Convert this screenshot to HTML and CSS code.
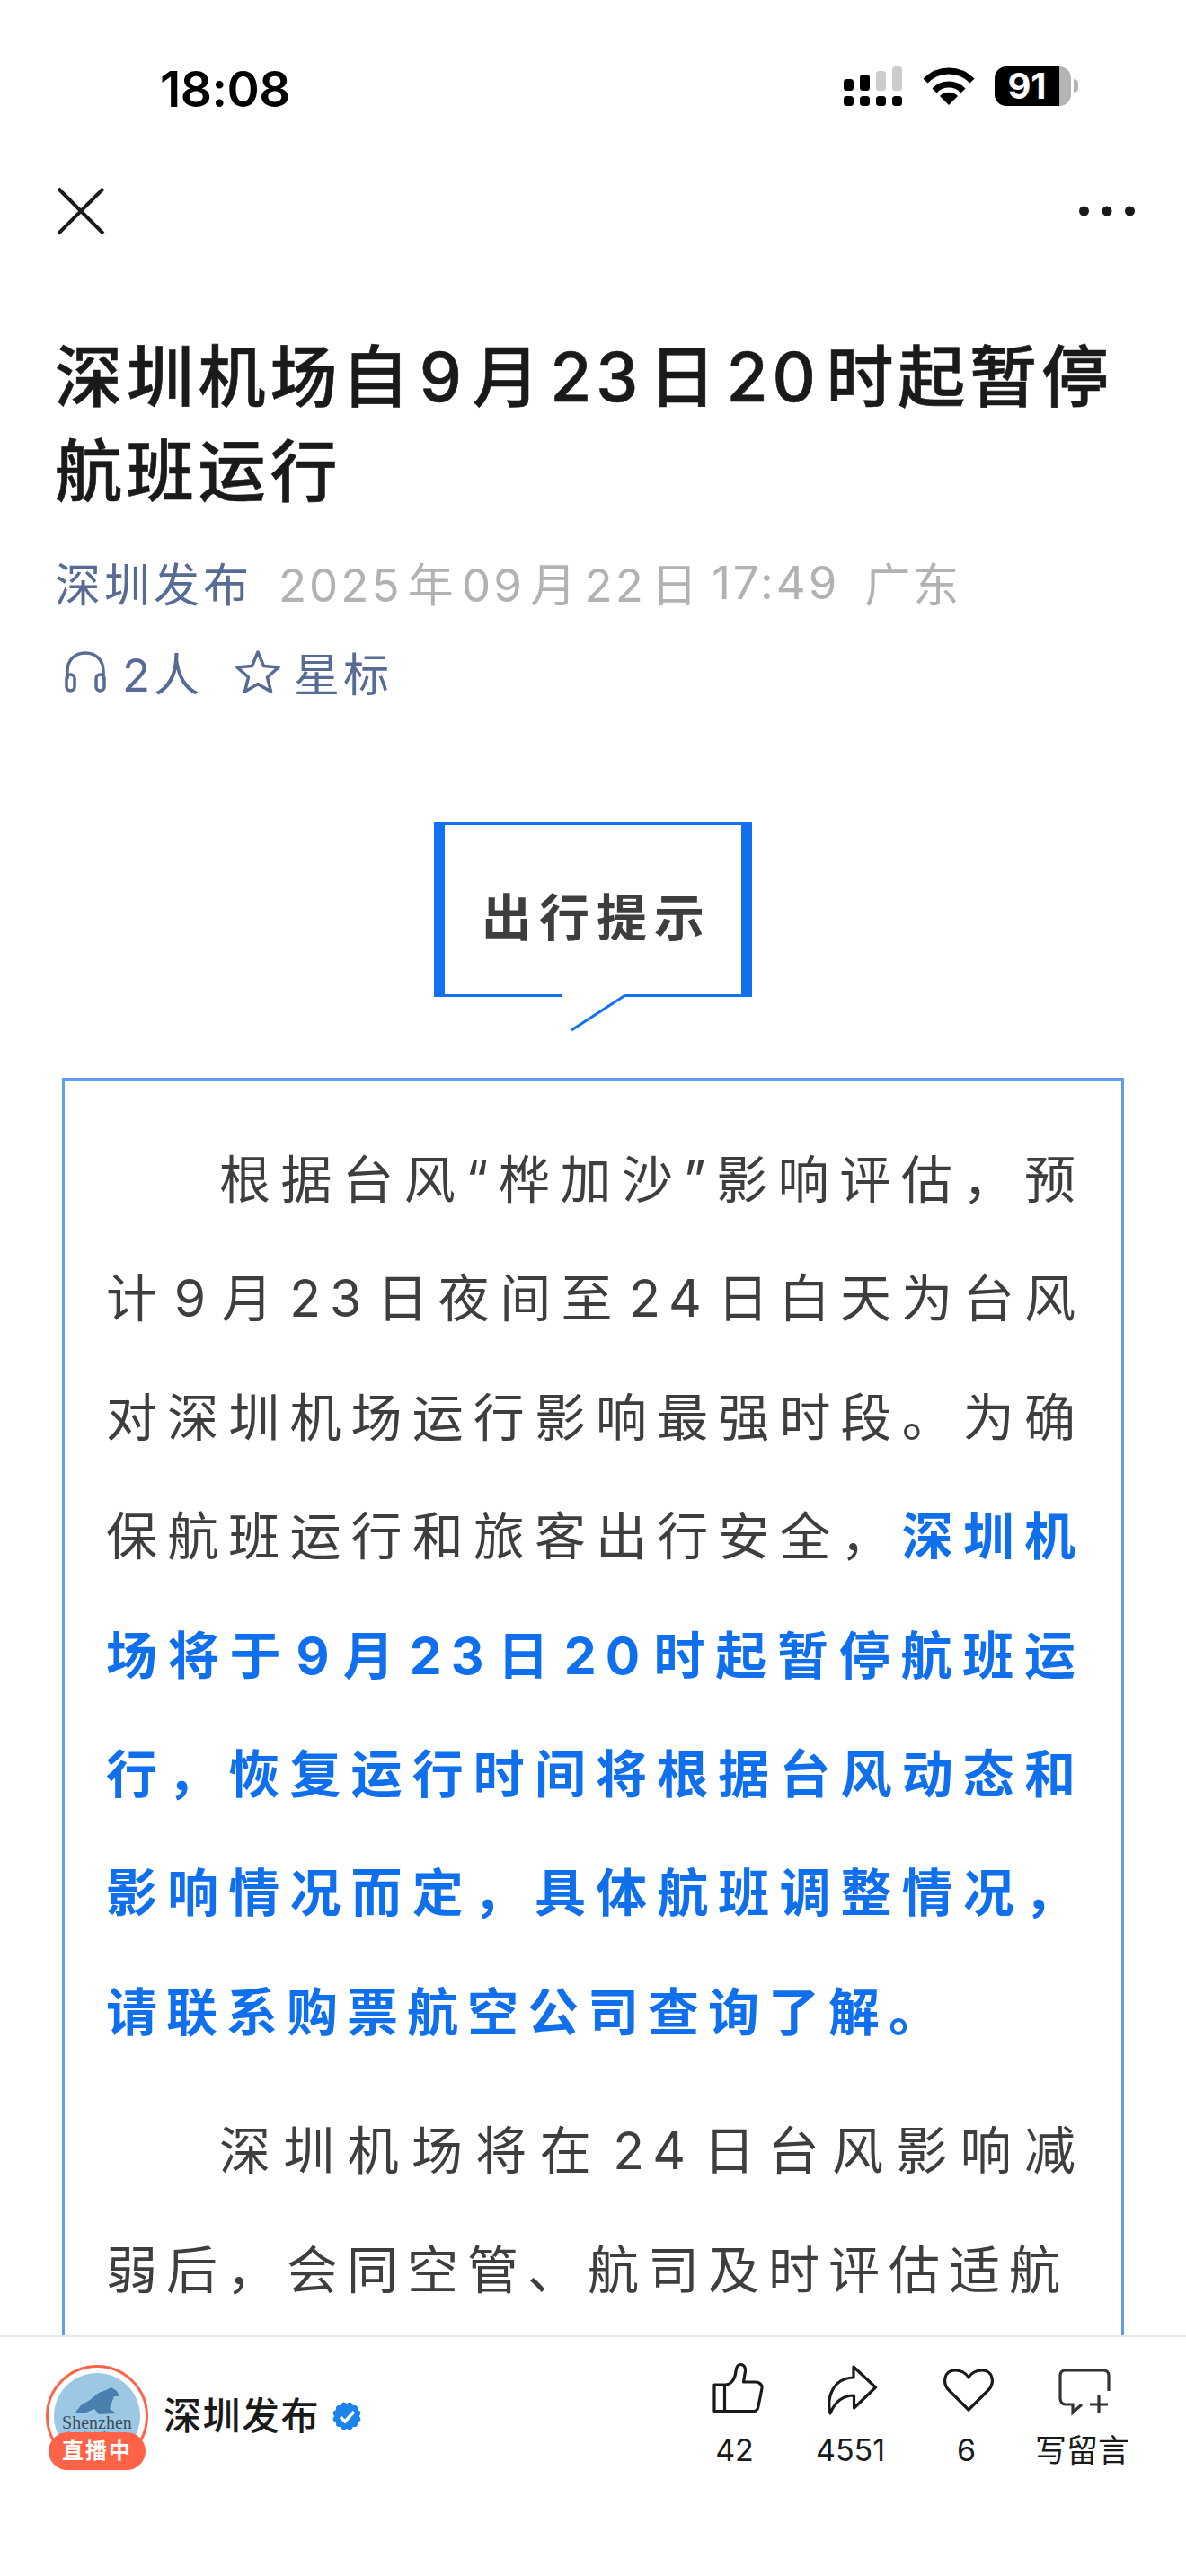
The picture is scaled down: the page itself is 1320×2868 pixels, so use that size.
FILE: index.html
```html
<!DOCTYPE html>
<html lang="zh-CN">
<head>
<meta charset="utf-8">
<title>深圳机场自9月23日20时起暂停航班运行</title>
<link rel="stylesheet" href="styles.css">
</head>
<body>
<div class="page">
  <header class="status">
    <span class="time">18:08</span>
    <div class="status-icons">
      <svg class="signal" width="66" height="44" viewBox="0 0 66 44">
        <rect x="0" y="14" width="11" height="13" rx="3.500" fill="#000"/>
        <rect x="18" y="9" width="11" height="18" rx="3.500" fill="#000"/>
        <rect x="36" y="5" width="11" height="22" rx="3.500" fill="#ccc"/>
        <rect x="54" y="0" width="11" height="27" rx="3.500" fill="#ccc"/>
        <rect x="0" y="33" width="11" height="11" rx="3.500" fill="#000"/>
        <rect x="18" y="33" width="11" height="11" rx="3.500" fill="#000"/>
        <rect x="36" y="33" width="11" height="11" rx="3.500" fill="#000"/>
        <rect x="54" y="33" width="11" height="11" rx="3.500" fill="#000"/>
      </svg>
      <svg class="wifi" width="58" height="42" viewBox="0 0 58 42">
        <path d="M3 15A36 36 0 0 1 55 15" fill="none" stroke="#000" stroke-width="7"/>
        <path d="M13 26A22 22 0 0 1 45 26" fill="none" stroke="#000" stroke-width="7"/>
        <path d="M29 42L19 32A14 14 0 0 1 39 32Z" fill="#000"/>
      </svg>
      <div class="battery"><span class="battery-level">91</span><i class="battery-rest"></i><i class="battery-nub"></i></div>
    </div>
  </header>

  <nav class="topbar">
    <svg width="54" height="54" viewBox="0 0 54 54"><path d="M2 2L52 52M52 2L2 52" stroke="#1a1a1a" stroke-width="4" fill="none"/></svg>
    <svg width="62" height="12" viewBox="0 0 62 12"><circle cx="5.500" cy="6" r="5.500" fill="#1a1a1a"/><circle cx="31" cy="6" r="5.500" fill="#1a1a1a"/><circle cx="56.500" cy="6" r="5.500" fill="#1a1a1a"/></svg>
  </nav>

  <main class="article">
    <h1 class="title">深圳机场自 9 月 23 日 20 时起暂停航班运行</h1>
    <div class="meta">
      <span class="source">深圳发布</span>
      <span class="date">2025 年 09 月 22 日</span>
      <span class="clock">17:49</span>
      <span class="region">广东</span>
    </div>
    <div class="meta-actions">
      <svg width="48" height="46" viewBox="0 0 48 46" fill="none" stroke="#576b95" stroke-width="3.500" stroke-linecap="round">
        <path d="M4 30V22C4 10 12 2 24 2S44 10 44 22V30"/>
        <rect x="3" y="26" width="9" height="18" rx="4.500"/>
        <rect x="36" y="26" width="9" height="18" rx="4.500"/>
      </svg>
      <span class="listen">2人</span>
      <svg class="star" width="52" height="50" viewBox="0 0 52 50" fill="none" stroke="#576b95" stroke-width="3.500" stroke-linejoin="round">
        <path d="M26 3L32.500 18.500L49 20L36.500 31L40.500 47L26 38.500L11.500 47L15.500 31L3 20L19.500 18.500Z"/>
      </svg>
      <span class="listen">星标</span>
    </div>

    <div class="callout-row">
      <div class="callout">
        <span class="callout-text">出行提示</span>
        <svg class="callout-tail" width="74" height="44" viewBox="0 0 74 44"><rect x="0" y="0" width="70" height="4" fill="#fff"/><path d="M70 1L10 40" stroke="#1271f2" stroke-width="3" fill="none"/></svg>
      </div>
    </div>

    <section class="notice">
      <p>根据台风“桦加沙”影响评估，预计 9 月 23 日夜间至 24 日白天为台风对深圳机场运行影响最强时段。为确保航班运行和旅客出行安全，<strong>深圳机场将于 9 月 23 日 20 时起暂停航班运行，恢复运行时间将根据台风动态和影响情况而定，具体航班调整情况，请联系购票航空公司查询了解。</strong></p>
      <p>深圳机场将在 24 日台风影响减弱后，会同空管、航司及时评估适航</p>
    </section>
  </main>

  <footer class="bar">
    <div class="account">
      <div class="avatar-ring">
        <div class="avatar">
          <svg class="bird" width="96" height="50" viewBox="0 0 96 50"><path d="M24 44L30 36L40 30L50 22L58 19L64 16L70 20L73 26L67 26L64 34L62 40L70 45L50 46L45 40L36 44Z" fill="#4b7fb0"/></svg>
          <span class="avatar-en">Shenzhen</span>
          <span class="avatar-cn">深圳发布</span>
        </div>
        <span class="live">直播中</span>
      </div>
      <span class="account-name">深圳发布</span>
      <svg class="verified" width="34" height="34" viewBox="0 0 34 34">
        <g fill="#1a83ec">
          <rect x="5" y="5" width="24" height="24" rx="3"/>
          <rect x="5" y="5" width="24" height="24" rx="3" transform="rotate(30 17 17)"/>
          <rect x="5" y="5" width="24" height="24" rx="3" transform="rotate(60 17 17)"/>
        </g>
        <path d="M10 18L15 23L25 12" fill="none" stroke="#fff" stroke-width="3.500"/>
      </svg>
    </div>
    <div class="actions">
      <div class="action">
        <svg width="58" height="62" viewBox="0 0 58 62" fill="none" stroke="#1a1a1a" stroke-width="3.200" stroke-linejoin="round">
          <path d="M2 25H14C20 25 25 20 26 10C26.500 5 29 2.500 31.500 2.500C35 2.500 37 6 36.500 10L34.500 22H48C52 22 55.500 25 55 29L51 49C50.500 52 49 54.500 46 54.500H2Z"/>
          <path d="M13.500 25V54.500"/>
        </svg>
        <span>42</span>
      </div>
      <div class="action">
        <svg width="58" height="62" viewBox="0 0 58 62" fill="none" stroke="#1a1a1a" stroke-width="3.200" stroke-linejoin="round">
          <path d="M30 5L54.500 28L30.500 51V37C20 37 10 42 4 57C0 40 6 18 30 17Z"/>
        </svg>
        <span>4551</span>
      </div>
      <div class="action">
        <svg width="58" height="62" viewBox="0 0 58 62" fill="none" stroke="#1a1a1a" stroke-width="3.200" stroke-linejoin="round">
          <path d="M29 53L7 31C0 24 1 9 14 9C21 9 26 12 29 17C32 12 37 9 44 9C57 9 58 24 51 31Z"/>
        </svg>
        <span>6</span>
      </div>
      <div class="action">
        <svg width="58" height="62" viewBox="0 0 58 62" fill="none" stroke="#333" stroke-width="3.200">
          <path d="M56 32V15C56 11 54 9 50 9H8C4 9 2 11 2 15V40C2 44 4 47 8 47H16V56L26 47"/>
          <path d="M35 47H55M45 37V57"/>
        </svg>
        <span class="write">写留言</span>
      </div>
    </div>
  </footer>
</div>
</body>
</html>
```

FILE: styles.css
```css
* { box-sizing: border-box; }
html, body { margin: 0; padding: 0; background: #fff; }
body { font-family: Inter, "Noto Sans CJK SC", sans-serif; color: #1a1a1a; }
.page { position: relative; width: 1320px; height: 2868px; overflow: hidden; }

.status { display: flex; justify-content: space-between; align-items: center; height: 44px; margin-top: 74px; padding: 0 128px 0 178px; }
.time { margin-top: 5px; font-size: 55px; font-weight: 600; letter-spacing: -0.500px; color: #000; line-height: 44px; }
.status-icons { display: flex; align-items: center; gap: 22px; }
.battery { position: relative; display: flex; width: 85px; height: 44px; }
.battery-level { width: 72px; height: 44px; background: #000; border-radius: 13px 0 0 13px; color: #fff; font-size: 40px; font-weight: 700; line-height: 44px; text-align: center; }
.battery-rest { width: 13px; height: 44px; background: #b4b4b4; border-radius: 0 13px 13px 0; }
.battery-nub { position: absolute; left: 88px; top: 14px; width: 5px; height: 15px; background: #b4b4b4; border-radius: 0 6px 6px 0; }

.topbar { display: flex; justify-content: space-between; align-items: center; height: 54px; margin-top: 90px; padding: 0 57px 0 63px; }

.article { padding: 0 61px; }
.title { margin: 105px 0 0; font-size: 75px; line-height: 105px; font-weight: 500; letter-spacing: 4.800px; word-spacing: -18px; color: #1a1a1a; -webkit-text-stroke: 0.600px #1a1a1a; }
.meta { display: flex; align-items: center; margin-top: 38px; height: 66px; font-size: 51px; letter-spacing: 3px; word-spacing: -11px; color: #b2b2b2; white-space: nowrap; }
.source { color: #576b95; margin-right: 29px; letter-spacing: 4px; }
.clock { margin-left: 13px; }
.region { margin-left: 28px; }
.meta-actions { display: flex; align-items: center; margin-top: 34px; height: 66px; font-size: 51px; letter-spacing: 3px; color: #576b95; }
.meta-actions svg { margin-left: 10px; }
.listen { margin-left: 17px; letter-spacing: 4px; }
.meta-actions .star { margin-left: 35px; }
.meta-actions .star + .listen { margin-left: 14px; }

.callout-row { display: flex; justify-content: center; margin-top: 134px; }
.callout { position: relative; display: flex; justify-content: center; align-items: center; width: 354px; height: 195px; border-style: solid; border-color: #1271f2; border-width: 3px 12px; font-size: 56px; font-weight: 700; letter-spacing: 8px; color: #3e3e3e; }
.callout-text { margin-right: -8px; margin-top: 10px; }
.callout-tail { position: absolute; left: 131px; bottom: -44px; }

.notice { width: 1182px; height: 1500px; margin: 90px 0 0 8px; padding: 45px 41px 0 46px; border: 3px solid #5f9df0; font-size: 57px; line-height: 132.400px; letter-spacing: 10px; word-spacing: -20px; color: #3e3e3e; }
.notice p { margin: 0 0 22px; text-indent: 126px; text-align: justify; }
.notice strong { font-weight: 700; color: #0f6fec; }

.bar { position: absolute; left: 0; right: 0; top: 2600px; height: 268px; display: flex; justify-content: space-between; align-items: flex-start; padding: 0 51px; background: #fff; border-top: 2px solid #e8e8e8; }
.account { display: flex; align-items: center; margin-top: 31px; height: 114px; }
.avatar-ring { position: relative; width: 114px; height: 114px; padding: 6px; border: 3px solid #ff6347; border-radius: 50%; }
.avatar { position: relative; display: flex; flex-direction: column; align-items: center; width: 96px; height: 96px; border-radius: 50%; background: #9dc8e3; overflow: hidden; font-family: "Liberation Serif", "Noto Sans CJK SC", serif; color: #3b4c5e; }
.bird { flex: none; margin-bottom: -4px; }
.avatar-en { font-size: 20px; line-height: 18px; }
.avatar-cn { font-size: 17px; line-height: 22px; white-space: nowrap; }
.live { position: absolute; left: 0; top: 72px; width: 108px; height: 42px; border-radius: 21px; background: #ff6347; color: #fff; font-size: 24px; font-weight: 700; line-height: 42px; letter-spacing: 2px; text-align: center; }
.account-name { margin-left: 17px; font-size: 42px; font-weight: 500; letter-spacing: 1.500px; line-height: 50px; color: #1a1a1a; }
.verified { margin-left: 13px; }
.actions { display: flex; margin-top: 28px; }
.action { display: flex; flex-direction: column; align-items: center; width: 129px; font-size: 34px; line-height: 40px; color: #1a1a1a; }
.action svg { margin-left: 5px; margin-bottom: 16px; }
.action:first-child svg { margin-left: 8px; }
.action .write { font-size: 35px; }
```
